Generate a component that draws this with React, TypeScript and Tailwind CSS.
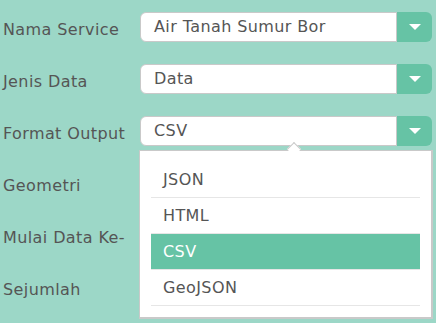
import { useState } from "react";

// Form rows - label and the current value (null = no visible control)
const FIELDS: { label: string; value: string | null }[] = [
  { label: "Nama Service", value: "Air Tanah Sumur Bor" },
  { label: "Jenis Data", value: "Data" },
  { label: "Format Output", value: "CSV" },
  { label: "Geometri", value: null },
  { label: "Mulai Data Ke-", value: null },
  { label: "Sejumlah", value: null },
];

const FORMAT_OPTIONS = ["JSON", "HTML", "CSV", "GeoJSON"];

const SelectBox = ({ value }: { value: string }) => {
  return (
    <div className="flex h-[30px] w-[292px]">
      <div className="flex flex-1 items-center rounded-l-[6px] border border-[#c9c9c9] bg-white pl-[13px] text-[#555]">
        {value}
      </div>
      <div className="flex w-[35px] items-center justify-center rounded-r-[6px] bg-[#66c3a5]">
        <span className="h-0 w-0 border-x-[6px] border-t-[6px] border-x-transparent border-t-white" />
      </div>
    </div>
  );
};

const App = () => {
  const [format, setFormat] = useState("CSV");

  return (
    <div
      className="relative h-[323px] w-[436px] overflow-hidden bg-[#9cd7c7] pt-[12px] text-[16px] tracking-[0.4px]"
      style={{ fontFamily: '"DejaVu Sans", Verdana, sans-serif' }}
    >
      <div className="flex flex-col gap-[22px]">
        {FIELDS.map((field) => (
          <div key={field.label} className="flex h-[30px] items-center">
            <label className="w-[140px] pl-[3px] pt-[5px] text-[#555]">{field.label}</label>
            {field.value !== null && (
              <SelectBox value={field.label === "Format Output" ? format : field.value} />
            )}
          </div>
        ))}
      </div>

      {/* Open dropdown for Format Output */}
      <div className="absolute left-[139px] top-[150px] w-[294px] border border-r-2 border-b-2 border-[#c9c9c9] bg-white px-[11px] pt-[11px] pb-[11px]">
        <span className="absolute left-[149px] -top-[7px] h-[10px] w-[10px] rotate-45 border-l border-t border-[#c9c9c9] bg-white" />
        <ul className="relative">
          {FORMAT_OPTIONS.map((opt) => (
            <li
              key={opt}
              onClick={() => setFormat(opt)}
              className={`flex h-[36px] cursor-pointer items-center border-b border-[#e6e6e6] pl-[12px] ${
                opt === format ? "bg-[#66c3a5] text-white" : "text-[#555]"
              }`}
            >
              {opt}
            </li>
          ))}
        </ul>
      </div>
    </div>
  );
};

export default App;
